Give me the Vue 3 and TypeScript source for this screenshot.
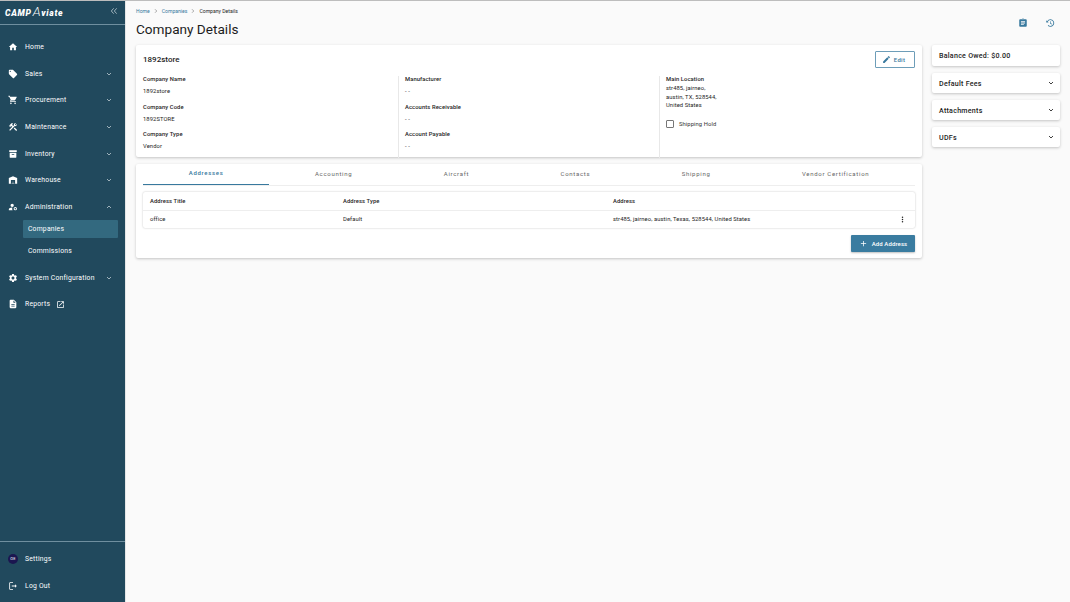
<script setup lang="ts">
type NavItem = {
  label: string
  icon: string
  arrow?: 'down' | 'up'
  external?: boolean
  children?: { label: string; active?: boolean }[]
}

const navItems: NavItem[] = [
  { label: 'Home', icon: 'M10 20v-6h4v6h5v-8h3L12 3 2 12h3v8z' },
  { label: 'Sales', arrow: 'down', icon: 'M21.41 11.58l-9-9C12.05 2.22 11.55 2 11 2H4c-1.1 0-2 .9-2 2v7c0 .55.22 1.05.59 1.42l9 9c.36.36.86.58 1.41.58.55 0 1.05-.22 1.41-.59l7-7c.37-.36.59-.86.59-1.41 0-.55-.23-1.06-.59-1.42zM5.5 7C4.67 7 4 6.33 4 5.5S4.67 4 5.5 4 7 4.67 7 5.5 6.33 7 5.5 7z' },
  { label: 'Procurement', arrow: 'down', icon: 'M7 18c-1.1 0-1.99.9-1.99 2S5.9 22 7 22s2-.9 2-2-.9-2-2-2zM1 2v2h2l3.6 7.59-1.35 2.45c-.16.28-.25.61-.25.96 0 1.1.9 2 2 2h12v-2H7.42c-.14 0-.25-.11-.25-.25l.03-.12.9-1.63h7.45c.75 0 1.41-.41 1.75-1.03l3.58-6.49c.08-.14.12-.31.12-.48 0-.55-.45-1-1-1H5.21l-.94-2H1zm16 16c-1.1 0-1.99.9-1.99 2s.89 2 1.99 2 2-.9 2-2-.9-2-2-2z' },
  { label: 'Maintenance', arrow: 'down', icon: 'M13.78 15.3l6 6 2.11-2.16-6-6zM17.5 10c1.93 0 3.5-1.57 3.5-3.5 0-.58-.16-1.12-.41-1.6l-2.7 2.7-1.49-1.49 2.7-2.7c-.48-.25-1.02-.41-1.6-.41C15.57 3 14 4.57 14 6.5c0 .41.08.8.21 1.16l-1.85 1.85-1.78-1.78.71-.71-1.41-1.41L12 3.49a3 3 0 0 0-4.24 0L4.22 7.03l1.41 1.41H2.81l-.71.71 3.54 3.54.71-.71V9.15l1.41 1.41.71-.71 1.78 1.78-7.41 7.41 2.12 2.12L16.34 9.79c.36.13.75.21 1.16.21z' },
  { label: 'Inventory', arrow: 'down', icon: 'M3 3h18v4H3zM4 9h16v11a1 1 0 0 1-1 1H5a1 1 0 0 1-1-1zM9 12v2h6v-2z' },
  { label: 'Warehouse', arrow: 'down', icon: 'M22 21V7L12 3 2 7v14h5v-9h10v9h5zM11 19H9v2h2zM13 16h-2v2h2zM15 19h-2v2h2z' },
  {
    label: 'Administration',
    arrow: 'up',
    icon: 'M10 4a4 4 0 1 0 0 8 4 4 0 0 0 0-8zM10.67 13.02c-.22-.01-.44-.02-.67-.02-2.42 0-4.68.67-6.61 1.82-.88.52-1.39 1.5-1.39 2.53V20h9.26c-.79-1.13-1.26-2.51-1.26-4 0-1.07.25-2.07.67-2.98zM17.5 12a4 4 0 1 0 0 8 4 4 0 0 0 0-8zm0 2.2a1.8 1.8 0 1 1 0 3.6 1.8 1.8 0 0 1 0-3.6z',
    children: [{ label: 'Companies', active: true }, { label: 'Commissions' }]
  },
  { label: 'System Configuration', arrow: 'down', icon: 'M19.14 12.94c.04-.3.06-.61.06-.94 0-.32-.02-.64-.07-.94l2.03-1.58c.18-.14.23-.41.12-.61l-1.92-3.32c-.12-.22-.37-.29-.59-.22l-2.39.96c-.5-.38-1.03-.7-1.62-.94l-.36-2.54c-.04-.24-.24-.41-.48-.41h-3.84c-.24 0-.43.17-.47.41l-.36 2.54c-.59.24-1.13.57-1.62.94l-2.39-.96c-.22-.08-.47 0-.59.22L2.74 8.87c-.12.21-.08.47.12.61l2.03 1.58c-.05.3-.09.63-.09.94s.02.64.07.94l-2.03 1.58c-.18.14-.23.41-.12.61l1.92 3.32c.12.22.37.29.59.22l2.39-.96c.5.38 1.03.7 1.62.94l.36 2.54c.05.24.24.41.48.41h3.84c.24 0 .44-.17.47-.41l.36-2.54c.59-.24 1.13-.56 1.62-.94l2.39.96c.22.08.47 0 .59-.22l1.92-3.32c.12-.22.07-.47-.12-.61l-2.01-1.58zM12 15.6c-1.98 0-3.6-1.62-3.6-3.6s1.62-3.6 3.6-3.6 3.6 1.62 3.6 3.6-1.62 3.6-3.6 3.6z' },
  { label: 'Reports', external: true, icon: 'M14 2H6c-1.1 0-1.99.9-1.99 2L4 20c0 1.1.89 2 1.99 2H18c1.1 0 2-.9 2-2V8l-6-6zm2 16H8v-2h8v2zm0-4H8v-2h8v2zm-3-5V3.5L18.5 9H13z' }
]

const columns = [
  [
    { label: 'Company Name', value: '1892store' },
    { label: 'Company Code', value: '1892STORE' },
    { label: 'Company Type', value: 'Vendor' }
  ],
  [
    { label: 'Manufacturer', value: '- -' },
    { label: 'Accounts Receivable', value: '- -' },
    { label: 'Account Payable', value: '- -' }
  ]
]

const tabs = ['Addresses', 'Accounting', 'Aircraft', 'Contacts', 'Shipping', 'Vendor Certification']
const panels = ['Default Fees', 'Attachments', 'UDFs']
</script>

<template>
  <div class="app">
    <aside class="sidebar">
      <div class="brand">
        <span class="logo">CAMP<em>A</em>viate</span>
        <svg class="collapse" viewBox="0 0 12 12"><path d="M5.5 2 2 6l3.5 4M10 2 6.500 6l3.500 4" /></svg>
      </div>
      <nav class="nav">
        <template v-for="item in navItems" :key="item.label">
          <div class="nav-item">
            <svg class="nav-icon" viewBox="0 0 24 24"><path fill-rule="evenodd" :d="item.icon" /></svg>
            <span>{{ item.label }}</span>
            <svg v-if="item.external" class="ext" viewBox="0 0 24 24"><path d="M19 19H5V5h7V3H5c-1.110 0-2 .9-2 2v14c0 1.100.89 2 2 2h14c1.100 0 2-.9 2-2v-7h-2v7zM14 3v2h3.590l-9.830 9.830 1.410 1.410L19 6.410V10h2V3h-7z" /></svg>
            <svg v-if="item.arrow" class="chev" :class="{ up: item.arrow === 'up' }" viewBox="0 0 12 12"><path d="M3 4.500 6 7.500l3-3" /></svg>
          </div>
          <div v-for="child in item.children" :key="child.label" class="sub-item" :class="{ active: child.active }">{{ child.label }}</div>
        </template>
      </nav>
      <div class="side-foot">
        <div class="nav-item">
          <span class="avatar">OE</span>
          <span>Settings</span>
        </div>
        <div class="nav-item">
          <svg class="nav-icon" viewBox="0 0 24 24"><path d="M5 5h7V3H5c-1.100 0-2 .9-2 2v14c0 1.100.9 2 2 2h7v-2H5V5zm16 7-4-4v3H9v2h8v3l4-4z" /></svg>
          <span>Log Out</span>
        </div>
      </div>
    </aside>

    <main class="main">
      <header class="top">
        <div>
          <div class="crumbs">
            <span class="link">Home</span>
            <svg viewBox="0 0 12 12"><path d="M4 2.500 7.500 6 4 9.500" /></svg>
            <span class="link">Companies</span>
            <svg viewBox="0 0 12 12"><path d="M4 2.500 7.500 6 4 9.500" /></svg>
            <span>Company Details</span>
          </div>
          <h1>Company Details</h1>
        </div>
        <div class="top-icons">
          <svg viewBox="0 0 24 24"><path d="M19 3h-4.180C14.400 1.840 13.300 1 12 1c-1.300 0-2.400.84-2.820 2H5c-1.100 0-2 .9-2 2v14c0 1.100.9 2 2 2h14c1.100 0 2-.9 2-2V5c0-1.100-.9-2-2-2zm-7 0c.55 0 1 .45 1 1s-.45 1-1 1-1-.45-1-1 .45-1 1-1zm2 14H7v-2h7v2zm3-4H7v-2h10v2zm0-4H7V7h10v2z" /></svg>
          <svg viewBox="0 0 24 24"><path d="M13 3a9 9 0 0 0-7.800 4.500L3 5.300V11h5.700L6.700 9A7 7 0 1 1 13 19a7 7 0 0 1-4.950-2.060l-1.420 1.420A9 9 0 1 0 13 3zm-1 5v5l4.280 2.540.72-1.210-3.500-2.080V8z" /></svg>
        </div>
      </header>

      <div class="content">
        <section class="left">
          <div class="card details">
            <div class="details-head">
              <h2>1892store</h2>
              <button class="edit">
                <svg viewBox="0 0 24 24"><path d="M3 17.250V21h3.750L17.810 9.940l-3.750-3.750L3 17.250zM20.710 7.040c.39-.39.39-1.020 0-1.410l-2.340-2.340c-.39-.39-1.020-.39-1.410 0l-1.830 1.830 3.750 3.750 1.830-1.830z" /></svg>
                Edit
              </button>
            </div>
            <div class="details-grid">
              <div v-for="(col, i) in columns" :key="i" class="col">
                <div v-for="field in col" :key="field.label" class="field">
                  <b>{{ field.label }}</b>
                  <span>{{ field.value }}</span>
                </div>
              </div>
              <div class="col">
                <b>Main Location</b>
                <p>str485, jairneo,<br />austin, TX, 528544,<br />United States</p>
                <label class="check"><i></i>Shipping Hold</label>
              </div>
            </div>
          </div>

          <div class="card tabs-card">
            <div class="tabs">
              <div v-for="(tab, i) in tabs" :key="tab" class="tab" :class="{ active: i === 0 }">{{ tab }}</div>
            </div>
            <div class="table">
              <div class="row head">
                <span>Address Title</span><span>Address Type</span><span>Address</span><span></span>
              </div>
              <div class="row">
                <span>office</span><span>Default</span><span>str485, jairneo, austin, Texas, 528544, United States</span>
                <svg class="dots" viewBox="0 0 24 24"><path d="M12 8a2 2 0 1 0 0-4 2 2 0 0 0 0 4zm0 2a2 2 0 1 0 0 4 2 2 0 0 0 0-4zm0 6a2 2 0 1 0 0 4 2 2 0 0 0 0-4z" /></svg>
              </div>
            </div>
            <div class="actions">
              <button class="add"><svg viewBox="0 0 24 24"><path d="M19 13h-6v6h-2v-6H5v-2h6V5h2v6h6v2z" /></svg>Add Address</button>
            </div>
          </div>
        </section>

        <section class="right">
          <div class="card panel balance">Balance Owed: $0.00</div>
          <div v-for="panel in panels" :key="panel" class="card panel">
            <span>{{ panel }}</span>
            <svg viewBox="0 0 12 12"><path d="M3 4.500 6 7.500l3-3" /></svg>
          </div>
        </section>
      </div>
    </main>
  </div>
</template>

<style>
html, body {
  margin: 0;
  background: #fafafa;
}
</style>

<style scoped>
.app {
  display: flex;
  height: 602px;
  width: 1070px;
  overflow: hidden;
  background: #fafafa;
  font-family: Roboto, "Liberation Sans", sans-serif;
  color: #1d1d1d;
  border-top: 1px solid #bdbdbd;
  box-sizing: border-box;
}

.sidebar {
  width: 125px;
  flex: none;
  display: flex;
  flex-direction: column;
  background: #21495d;
  color: #fff;
  border-right: 1px solid #e4e6e7;
}

.brand {
  height: 23px;
  display: flex;
  align-items: center;
  justify-content: space-between;
  padding: 0 7px 0 5px;
  border-bottom: 1px solid #6f8f9f;
}

.logo {
  font: italic 900 8.6px Roboto, sans-serif;
  letter-spacing: 0.7px;
}

.logo em {
  font-size: 13px;
  font-weight: 300;
  margin-left: 1px;
  line-height: 8px;
}

.collapse {
  width: 8px;
  height: 8px;
  margin-top: -3px;
  fill: none;
  stroke: #dfe8ec;
  stroke-width: 1;
}

.nav {
  padding-top: 8.5px;
}

.nav-item {
  height: 26.7px;
  display: flex;
  align-items: center;
  padding: 0 12px 0 8px;
  font-size: 6.8px;
  font-weight: 400;
  letter-spacing: 0.22px;
}

.nav-icon {
  width: 10px;
  height: 10px;
  margin-right: 7px;
  fill: #fff;
  flex: none;
}

.ext {
  width: 9px;
  height: 9px;
  margin-left: 6px;
  fill: #fff;
}

.chev {
  width: 8px;
  height: 8px;
  margin-left: auto;
  fill: none;
  stroke: #dfe8ec;
  stroke-width: 1;
}

.chev.up {
  transform: rotate(180deg);
}

.sub-item {
  height: 18px;
  margin: 0 7px 4px 23px;
  padding-left: 5px;
  display: flex;
  align-items: center;
  font-size: 6.8px;
  font-weight: 400;
  letter-spacing: 0.2px;
  border-radius: 1px;
}

.sub-item.active {
  background: #33697f;
}

.side-foot {
  margin-top: auto;
  padding: 4px 0 3px;
  border-top: 1px solid #6f8f9f;
}

.avatar {
  width: 10px;
  height: 10px;
  margin-right: 7px;
  border-radius: 50%;
  flex: none;
  display: flex;
  align-items: center;
  justify-content: center;
  background: #1b1650;
  font-size: 4px;
}

.main {
  flex: 1;
  min-width: 0;
  padding: 0 10px 0 10px;
}

.top {
  display: flex;
  justify-content: space-between;
  height: 44px;
}

.crumbs {
  display: flex;
  align-items: center;
  gap: 3px;
  height: 19px;
  font-size: 5.1px;
}

.crumbs .link {
  color: #38799e;
}

.crumbs svg {
  width: 6px;
  height: 6px;
  fill: none;
  stroke: #555;
  stroke-width: 1;
}

h1 {
  margin: 0;
  font-size: 13.6px;
  font-weight: 400;
  line-height: 18px;
}

.top-icons {
  display: flex;
  gap: 17px;
  padding: 17px 5px 0 0;
}

.top-icons svg {
  width: 10px;
  height: 10px;
  fill: #38799e;
}

.content {
  display: flex;
  align-items: flex-start;
  gap: 10px;
}

.left {
  width: 786px;
  flex: none;
  display: flex;
  flex-direction: column;
  gap: 7px;
}

.right {
  flex: 1;
  display: flex;
  flex-direction: column;
  gap: 7px;
}

.card {
  background: #fff;
  border-radius: 2px;
  box-shadow: 0 1px 3px rgba(0, 0, 0, 0.22);
}

.details {
  height: 112px;
  padding: 6px 7px 0;
  box-sizing: border-box;
}

.details-head {
  display: flex;
  align-items: center;
  justify-content: space-between;
  height: 17px;
}

h2 {
  margin: 0;
  font-size: 8px;
  font-weight: 500;
}

.edit {
  width: 40px;
  height: 17px;
  display: flex;
  align-items: center;
  justify-content: center;
  gap: 3px;
  background: #fff;
  border: 1px solid #6d9db8;
  border-radius: 1px;
  color: #38799e;
  font: 500 6px Roboto, sans-serif;
  letter-spacing: 0.3px;
  padding: 0 3px 0 0;
}

.edit svg {
  width: 9px;
  height: 9px;
  fill: #38799e;
}

.details-grid {
  display: grid;
  grid-template-columns: 255px 261px 1fr;
  margin-top: 8px;
  height: 75px;
}

.col {
  border-left: 1px solid #e8e8e8;
  padding-left: 6px;
  font-size: 5.8px;
  letter-spacing: 0.1px;
}

.col:first-child {
  border-left: 0;
  padding-left: 0;
}

.field {
  height: 27.6px;
  display: flex;
  flex-direction: column;
  gap: 5px;
}

.col b {
  font-size: 5.8px;
  font-weight: 500;
  letter-spacing: 0.1px;
  line-height: 7px;
  display: block;
  margin-top: 0;
}

.field span {
  line-height: 7px;
}

.col p {
  margin: 1px 0 0;
  line-height: 8.7px;
}

.check {
  display: flex;
  align-items: center;
  gap: 5px;
  margin-top: 10px;
  color: #333;
}

.check i {
  width: 6px;
  height: 6px;
  border: 1px solid #777;
  border-radius: 1px;
}

.tabs-card {
  height: 94px;
  padding: 0 7px;
  box-sizing: border-box;
}

.tabs {
  display: flex;
  height: 21px;
  border-bottom: 1px solid #eeeeee;
}

.tab {
  flex: 1 1 auto;
  display: flex;
  align-items: center;
  justify-content: center;
  height: 21px;
  padding-bottom: 3px;
  box-sizing: border-box;
  font-size: 6px;
  letter-spacing: 0.7px;
  color: #666;
}

.tab.active {
  color: #38799e;
  font-weight: 500;
  border-bottom: 1px solid #38799e;
}

.table {
  margin-top: 6px;
  border-radius: 2px;
  box-shadow: 0 0 2px rgba(0, 0, 0, 0.25);
  font-size: 5.8px;
  letter-spacing: 0.1px;
}

.row {
  display: grid;
  grid-template-columns: 193px 270px 1fr 17px;
  align-items: center;
  height: 17.5px;
  padding-left: 7px;
}

.row.head {
  font-weight: 500;
  border-bottom: 1px solid #eee;
}

.dots {
  width: 9px;
  height: 9px;
  fill: #222;
}

.actions {
  display: flex;
  justify-content: flex-end;
  margin-top: 7px;
}

.add {
  width: 64px;
  height: 17px;
  display: flex;
  align-items: center;
  justify-content: center;
  gap: 4px;
  padding: 0;
  background: #3a7ca0;
  border: 0;
  border-radius: 1px;
  color: #fff;
  font: 500 6px Roboto, sans-serif;
  letter-spacing: 0.1px;
  box-shadow: 0 1px 2px rgba(0, 0, 0, 0.25);
}

.add svg {
  width: 9px;
  height: 9px;
  fill: #fff;
}

.panel {
  height: 20px;
  display: flex;
  align-items: center;
  justify-content: space-between;
  padding: 0 5px 0 7px;
  font-size: 7.1px;
  font-weight: 500;
  letter-spacing: 0.25px;
}

.balance {
  height: 21px;
}

.panel svg {
  width: 8px;
  height: 8px;
  fill: none;
  stroke: #222;
  stroke-width: 1.3;
}
</style>
